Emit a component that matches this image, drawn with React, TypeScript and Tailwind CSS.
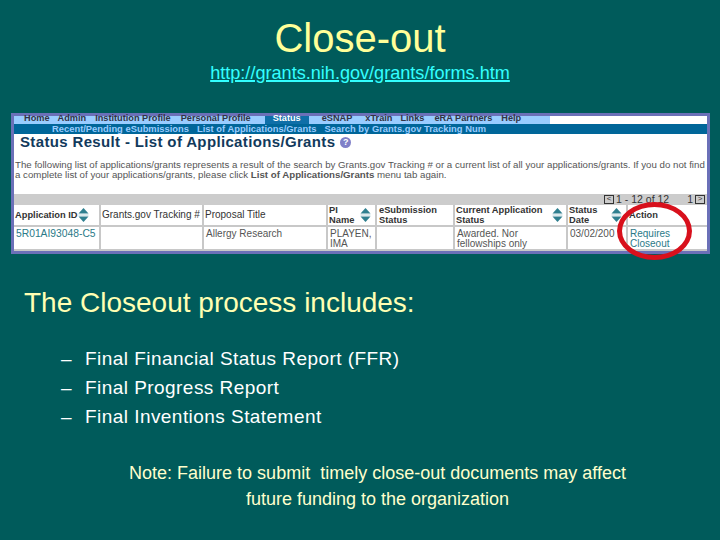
function SortIcon({ className = '' }: { className?: string }) {
  return (
    <svg width="11" height="14" viewBox="0 0 11 14" className={`shrink-0 ${className}`}>
      <path d="M5.5 0 L10.5 5.5 H0.5 Z" fill="#2f7f8f" />
      <path d="M5.5 14 L10.5 8.5 H0.5 Z" fill="#2f7f8f" />
      <rect x="0.5" y="6.5" width="10" height="1" fill="#b7d3da" />
    </svg>
  );
}

function Th({ w, children, last }: { w: string; children: React.ReactNode; last?: boolean }) {
  return (
    <div
      className={`${w} flex items-center h-full shrink-0 pl-[1px] text-[9.3px] leading-[10px] font-bold text-[#333] ${
        last ? '' : 'border-r-2 border-[#c8c8c8]'
      }`}
    >
      {children}
    </div>
  );
}

function Td({ w, children, last }: { w: string; children?: React.ReactNode; last?: boolean }) {
  return (
    <div
      className={`${w} h-full shrink-0 pl-[2px] pt-[2px] text-[10px] leading-[10px] text-[#555] ${
        last ? '' : 'border-r-2 border-[#c8c8c8]'
      }`}
    >
      {children}
    </div>
  );
}

function PortalShot() {
  return (
    <div className="relative mx-[11px] mt-[29px] h-[141px] w-[699px] border-[3px] border-[#6b70b8] bg-white">
      <div className="flex h-[8px] bg-white">
        <div className="flex h-full w-[536px] bg-[#99ccff] pl-[10px] text-[9.2px] font-bold leading-[4px] text-[#334] whitespace-nowrap">
          <span>Home</span>
          <span className="ml-[8px]">Admin</span>
          <span className="ml-[9px]">Institution Profile</span>
          <span className="ml-[10px]">Personal Profile</span>
          <span className="ml-[14px] h-[8px] bg-[#0f6fa8] px-[8px] text-white">Status</span>
          <span className="ml-[13px]">eSNAP</span>
          <span className="ml-[13px]">xTrain</span>
          <span className="ml-[8px]">Links</span>
          <span className="ml-[10px]">eRA Partners</span>
          <span className="ml-[9px]">Help</span>
        </div>
      </div>
      <div className="flex h-[10px] gap-[8px] bg-[#006699] pl-[38px] text-[9.4px] font-bold leading-[10px] text-[#99ccff] whitespace-nowrap">
        <span>Recent/Pending eSubmissions</span>
        <span>List of Applications/Grants</span>
        <span>Search by Grants.gov Tracking Num</span>
      </div>
      <div className="flex h-[16px] items-center pl-[6px] gap-[5px] text-[15px] font-bold leading-[16px] tracking-[0.35px] text-[#123a5c] whitespace-nowrap">
        Status Result - List of Applications/Grants
        <span className="flex h-[11px] w-[11px] items-center justify-center rounded-full bg-[#8080c8] text-[9px] text-white">?</span>
      </div>
      <div className="mt-[10px] h-[20px] overflow-hidden pl-[1px] text-[9.7px] leading-[10px] text-[#555] whitespace-nowrap">
        <div>The following list of applications/grants represents a result of the search by Grants.gov Tracking # or a current list of all your applications/grants. If you do not find</div>
        <div>a complete list of your applications/grants, please click <b>List of Applications/Grants</b> menu tab again.</div>
      </div>
      <div className="mt-[14px] flex h-[11px] items-center justify-end bg-[#cccccc] pr-[2px] text-[10.5px] leading-[11px] text-[#333]">
        <span className="mr-[2px] h-[9px] w-[10px] border border-[#333] text-[8px] leading-[6px] text-center">&lt;</span>
        <span>1 - 12 of 12</span>
        <span className="ml-[18px] mr-[2px]">1</span>
        <span className="h-[9px] w-[10px] border border-[#333] text-[8px] leading-[6px] text-center">&gt;</span>
      </div>
      <div className="flex h-[22px] border-b-2 border-[#c8c8c8]">
        <Th w="w-[87px]">
          Application ID
          <SortIcon />
        </Th>
        <Th w="w-[103px]">
          <span className="font-normal text-[10px] whitespace-nowrap">Grants.gov Tracking #</span>
        </Th>
        <Th w="w-[124px]">
          <span className="font-normal text-[10px]">Proposal Title</span>
        </Th>
        <Th w="w-[49px]">
          <span>
            PI
            <br />
            Name
          </span>
          <SortIcon className="ml-[6px]" />
        </Th>
        <Th w="w-[78px]">
          <span className="pl-[1px]">
            eSubmission
            <br />
            Status
          </span>
        </Th>
        <Th w="w-[113px]">
          <span className="whitespace-nowrap">
            Current Application
            <br />
            Status
          </span>
          <SortIcon className="ml-[10px]" />
        </Th>
        <Th w="w-[60px]">
          <span>
            Status
            <br />
            Date
          </span>
          <SortIcon className="ml-[14px]" />
        </Th>
        <Th w="w-[78px]" last>
          Action
        </Th>
      </div>
      <div className="flex h-[24px] border-b-2 border-[#c8c8c8]">
        <Td w="w-[87px]">
          <span className="text-[10.3px] text-[#2b7a88]">5R01AI93048-C5</span>
        </Td>
        <Td w="w-[103px]" />
        <Td w="w-[124px]">Allergy Research</Td>
        <Td w="w-[49px]">
          PLAYEN,
          <br />
          IMA
        </Td>
        <Td w="w-[78px]" />
        <Td w="w-[113px]">
          Awarded. Nor
          <br />
          fellowships only
        </Td>
        <Td w="w-[60px]">03/02/200</Td>
        <Td w="w-[78px]" last>
          <span className="text-[#2b7a88]">
            Requires
            <br />
            Closeout
          </span>
        </Td>
      </div>
      <div className="absolute left-[603px] top-[86px] h-[58px] w-[75px] rounded-[50%] border-[5px] border-[#d8101c]" />
    </div>
  );
}

export default function App() {
  return (
    <div className="h-[540px] w-[720px] overflow-hidden bg-[#005b5b] font-['Liberation_Sans',sans-serif]">
      <div className="pt-[16px] text-center text-[40px] leading-[45px] text-[#ffff99]">Close-out</div>
      <div className="mt-[2px] text-center text-[18.1px] leading-[21px]">
        <a className="text-[#33ffff] underline decoration-2">http://grants.nih.gov/grants/forms.htm</a>
      </div>
      <PortalShot />
      <div className="mt-[33px] pl-[24px] text-[28px] leading-[32px] text-[#ffffb3]">The Closeout process includes:</div>
      <ul className="mt-[25px] pl-[61px] text-[19px] leading-[29px] tracking-[0.45px] text-white">
        <li className="flex"><span className="w-[24px]">–</span>Final Financial Status Report (FFR)</li>
        <li className="flex"><span className="w-[24px]">–</span>Final Progress Report</li>
        <li className="flex"><span className="w-[24px]">–</span>Final Inventions Statement</li>
      </ul>
      <div className="mt-[29px] pl-[35px] text-center text-[18px] leading-[26px] text-[#ffffcc]">
        Note: Failure to submit&nbsp; timely close-out documents may affect
        <br />
        future funding to the organization
      </div>
    </div>
  );
}
